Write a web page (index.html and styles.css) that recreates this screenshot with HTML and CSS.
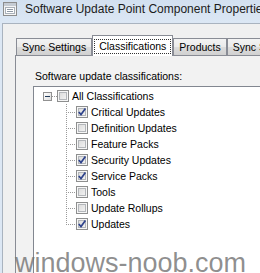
FILE: index.html
```html
<!DOCTYPE html>
<html>
<head>
<meta charset="utf-8">
<link rel="stylesheet" href="styles.css">
</head>
<body>
<div class="window">
  <div class="titlebar">
    <svg class="appicon" width="14" height="14" viewBox="0 0 14 14">
      <rect x="0.5" y="0.5" width="13" height="13" fill="#f4f4f4" stroke="#8d8d8d"/>
      <rect x="1" y="1" width="12" height="3" fill="#c5cbd3"/>
      <rect x="2.5" y="5.5" width="9" height="6" fill="#fff" stroke="#a9b0b9"/>
      <line x1="4" y1="7.5" x2="10" y2="7.5" stroke="#8e98a4"/>
      <line x1="4" y1="9.5" x2="10" y2="9.5" stroke="#8e98a4"/>
    </svg>
    <span class="title">Software Update Point Component Properties</span>
  </div>
  <div class="client">
    <div class="tabs">
      <div class="tab">Sync Settings</div>
      <div class="tab active"><span class="focus">Classifications</span></div>
      <div class="tab">Products</div>
      <div class="tab">Sync Schedule</div>
    </div>
    <div class="panel">
      <div class="label">Software update classifications:</div>
      <div class="tree">
        <div class="row root">
          <span class="expander"></span><span class="hconn"></span><span class="cb"></span><span class="text">All Classifications</span>
        </div>
        <div class="children">
          <div class="row"><span class="conn"></span><span class="cb checked"><svg width="10" height="10" viewBox="0 0 10 10"><path d="M1.8 5 L4 7.6 L8.4 1.6" fill="none" stroke="#2e438c" stroke-width="1.7"/></svg></span><span class="text">Critical Updates</span></div>
          <div class="row"><span class="conn"></span><span class="cb"></span><span class="text">Definition Updates</span></div>
          <div class="row"><span class="conn"></span><span class="cb"></span><span class="text">Feature Packs</span></div>
          <div class="row"><span class="conn"></span><span class="cb checked"><svg width="10" height="10" viewBox="0 0 10 10"><path d="M1.8 5 L4 7.6 L8.4 1.6" fill="none" stroke="#2e438c" stroke-width="1.7"/></svg></span><span class="text">Security Updates</span></div>
          <div class="row"><span class="conn"></span><span class="cb checked"><svg width="10" height="10" viewBox="0 0 10 10"><path d="M1.8 5 L4 7.6 L8.4 1.6" fill="none" stroke="#2e438c" stroke-width="1.7"/></svg></span><span class="text">Service Packs</span></div>
          <div class="row"><span class="conn"></span><span class="cb"></span><span class="text">Tools</span></div>
          <div class="row"><span class="conn"></span><span class="cb"></span><span class="text">Update Rollups</span></div>
          <div class="row last"><span class="conn"></span><span class="cb checked"><svg width="10" height="10" viewBox="0 0 10 10"><path d="M1.8 5 L4 7.6 L8.4 1.6" fill="none" stroke="#2e438c" stroke-width="1.7"/></svg></span><span class="text">Updates</span></div>
        </div>
      </div>
    </div>
  </div>
</div>
<div class="watermark">windows-noob.com</div>
</body>
</html>
```
FILE: styles.css
```css
html, body {
  margin: 0;
  padding: 0;
}
body {
  width: 260px;
  height: 273px;
  overflow: hidden;
  position: relative;
  font-family: "Liberation Sans", Arial, sans-serif;
  background: #dbe6f3;
}
.window {
  width: 300px;
  height: 273px;
  display: flex;
  flex-direction: column;
  background: linear-gradient(#d2e0f0, #dce7f4 23px);
}
.titlebar {
  height: 23px;
  flex: none;
  display: flex;
  align-items: flex-start;
}
.appicon {
  flex: none;
  margin: 2px 0 0 3px;
}
.title {
  margin: 1px 0 0 8px;
  font-size: 12px;
  line-height: 16px;
  color: #1b1b1b;
  white-space: nowrap;
}
.client {
  flex: 1;
  display: flex;
  flex-direction: column;
  margin-left: 2px;
  border-top: 1px solid #a9b3bf;
  border-left: 1px solid #a9b3bf;
  background: #f0f0f0;
  padding-top: 11px;
}
.tabs {
  display: flex;
  align-items: flex-end;
  margin-left: 13px;
  font-size: 10.5px;
  color: #000;
}
.tab {
  border: 1px solid #898c95;
  border-bottom: none;
  padding: 0 5px;
  line-height: 17px;
  white-space: nowrap;
  background: linear-gradient(#f3f3f3, #ebebeb 45%, #dcdcdc 50%, #cfcfcf);
}
.tab.active {
  position: relative;
  z-index: 1;
  background: #fff;
  padding: 3px 1px 2px;
  line-height: 13px;
}
.focus {
  display: block;
  border: 1px dotted #333;
  padding: 0 4px;
}
.panel {
  flex: 1;
  margin: -1px 0 0 12px;
  border: 1px solid #898c95;
  background: #f2f2f2;
  padding: 14px 0 0 19px;
}
.label {
  font-size: 10.5px;
  line-height: 13px;
  color: #000;
  white-space: nowrap;
}
.tree {
  margin: 3px 0 0 -2px;
  border: 1px solid #828790;
  background: #fff;
  padding-top: 1px;
  height: 200px;
}
.row {
  display: flex;
  align-items: center;
  height: 16px;
  font-size: 10.5px;
  color: #000;
  white-space: nowrap;
}
.root {
  padding-left: 9px;
}
.expander {
  flex: none;
  width: 9px;
  height: 9px;
  box-sizing: border-box;
  border: 1px solid #919191;
  background:
    linear-gradient(#1f3a5a, #1f3a5a) center / 5px 1px no-repeat,
    linear-gradient(135deg, #ffffff, #dcdcdc);
}
.hconn {
  flex: none;
  width: 5px;
  height: 1px;
  background: repeating-linear-gradient(to right, #9a9a9a 0 1px, transparent 1px 2px);
}
.children {
  padding-left: 32px;
}
.conn {
  flex: none;
  width: 10px;
  height: 16px;
  background:
    repeating-linear-gradient(to bottom, #9a9a9a 0 1px, transparent 1px 2px) 0 0 / 1px 100% no-repeat,
    repeating-linear-gradient(to right, #9a9a9a 0 1px, transparent 1px 2px) 0 8px / 100% 1px no-repeat;
}
.last .conn {
  background-size: 1px 9px, 100% 1px;
}
.cb {
  flex: none;
  width: 12px;
  height: 12px;
  box-sizing: border-box;
  border: 1px solid #8e8f8f;
  box-shadow: inset 0 0 0 1px #f6f6f6, inset 0 0 0 2px #b3b6ba;
  background: linear-gradient(135deg, #d6d6d6, #f8f8f8);
  display: flex;
  align-items: center;
  justify-content: center;
}
.cb svg {
  display: block;
}
.text {
  margin-left: 3px;
}
.watermark {
  position: absolute;
  left: 15px;
  top: 253px;
  font-family: "Liberation Sans", Arial, sans-serif;
  font-size: 27px;
  line-height: 20px;
  color: rgba(112, 112, 112, 0.78);
  white-space: nowrap;
}
```
